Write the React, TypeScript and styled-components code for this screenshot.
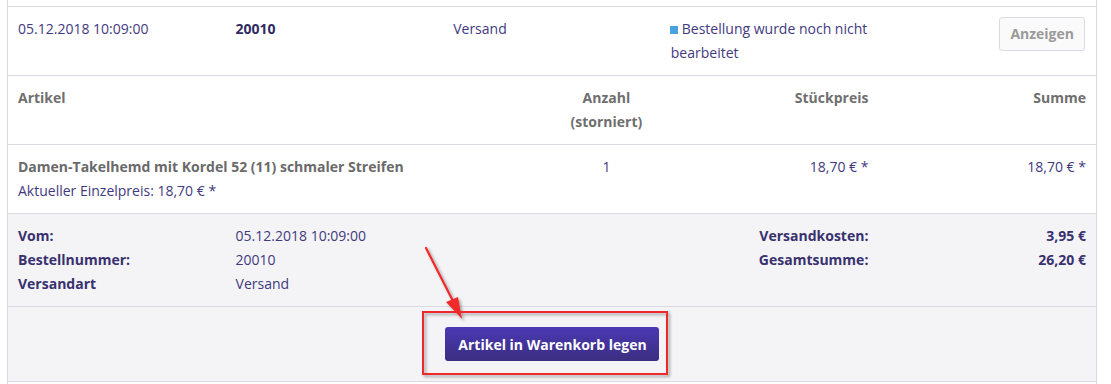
import React from "react";
import styled, { createGlobalStyle } from "styled-components";

const Global = createGlobalStyle`
  html, body { margin: 0; padding: 0; background: #fff; }
  body {
    font-family: "Open Sans", "Liberation Sans", sans-serif;
    font-size: 14px;
    line-height: 24px;
    color: #3f3a80;
  }
`;

const Page = styled.div`
  position: relative;
  width: 1111px;
  height: 384px;
  overflow: hidden;
`;

const Box = styled.div`
  margin-left: 7px;
  width: 1090px;
  box-sizing: border-box;
  border-left: 1px solid #dadae5;
  border-right: 1px solid #dadae5;
`;

const Spacer = styled.div<{ $h: number }>`
  height: ${(p) => p.$h}px;
`;

const Row = styled.div<{ $cols: string; $gray?: boolean }>`
  display: grid;
  grid-template-columns: ${(p) => p.$cols};
  border-top: 1px solid #dadae5;
  padding: 10px 0;
  background: ${(p) => (p.$gray ? "#f4f4f6" : "#fff")};
`;

const Cell = styled.div<{ $align?: "left" | "center" | "right" }>`
  padding: 0 10px;
  text-align: ${(p) => p.$align || "left"};
  min-width: 0;
`;

const Strong = styled.span`
  font-weight: 700;
  color: #2f2b62;
`;

const Status = styled.span`
  display: inline;
`;

const StatusDot = styled.span`
  display: inline-block;
  width: 8px;
  height: 8px;
  background: #4aa3df;
  margin-right: 4px;
  margin-left: -1px;
  vertical-align: 0px;
`;

const GhostButton = styled.button`
  font-family: inherit;
  font-size: 14px;
  font-weight: 700;
  color: #9a9a9a;
  background: #fafafb;
  border: 1px solid #dadae5;
  border-radius: 3px;
  height: 34px;
  padding: 0 10px;
  line-height: 32px;
  margin-right: 1px;
  cursor: pointer;
`;

const HeadText = styled.div`
  font-weight: 700;
  color: #6f6f6f;
`;

const ProductName = styled.div`
  font-weight: 700;
  color: #6a6a6a;
`;

const Label = styled.div`
  font-weight: 700;
  color: #38316f;
`;

const Value = styled.div`
  color: #3f3a80;
`;

const ActionRow = styled.div`
  display: flex;
  justify-content: center;
  border-top: 1px solid #dadae5;
  border-bottom: 1px solid #dadae5;
  background: #f4f4f6;
  padding: 20px 0 20px;
`;

const PrimaryButton = styled.button`
  font-family: inherit;
  font-size: 14px;
  font-weight: 700;
  color: #fff;
  height: 34px;
  padding: 0 12px 0 13px;
  border: 0;
  border-radius: 3px;
  background: linear-gradient(to bottom, #4b38b4 0%, #3b2e80 100%);
  cursor: pointer;
`;

const Annotation = styled.svg`
  position: absolute;
  left: 0;
  top: 0;
  pointer-events: none;
`;

export default function App() {
  return (
    <Page>
      <Global />
      <Box>
        <Spacer $h={6} />
        <Row $cols="repeat(5, 1fr)">
          <Cell>05.12.2018 10:09:00</Cell>
          <Cell>
            <Strong>20010</Strong>
          </Cell>
          <Cell>Versand</Cell>
          <Cell>
            <Status>
              <StatusDot />
              Bestellung wurde noch nicht bearbeitet
            </Status>
          </Cell>
          <Cell $align="right">
            <GhostButton>Anzeigen</GhostButton>
          </Cell>
        </Row>
        <Row $cols="50% 10% 20% 20%">
          <Cell>
            <HeadText>Artikel</HeadText>
          </Cell>
          <Cell $align="center">
            <HeadText>
              Anzahl
              <br />
              (storniert)
            </HeadText>
          </Cell>
          <Cell $align="right">
            <HeadText>Stückpreis</HeadText>
          </Cell>
          <Cell $align="right">
            <HeadText>Summe</HeadText>
          </Cell>
        </Row>
        <Row $cols="50% 10% 20% 20%">
          <Cell>
            <ProductName>Damen-Takelhemd mit Kordel 52 (11) schmaler Streifen</ProductName>
            <Value>Aktueller Einzelpreis: 18,70 € *</Value>
          </Cell>
          <Cell $align="center">
            <Value>1</Value>
          </Cell>
          <Cell $align="right">
            <Value>18,70 € *</Value>
          </Cell>
          <Cell $align="right">
            <Value>18,70 € *</Value>
          </Cell>
        </Row>
        <Row $cols="repeat(5, 1fr)" $gray>
          <Cell>
            <Label>Vom:</Label>
            <Label>Bestellnummer:</Label>
            <Label>Versandart</Label>
          </Cell>
          <Cell>
            <Value>05.12.2018 10:09:00</Value>
            <Value>20010</Value>
            <Value>Versand</Value>
          </Cell>
          <Cell />
          <Cell $align="right">
            <Label>Versandkosten:</Label>
            <Label>Gesamtsumme:</Label>
          </Cell>
          <Cell $align="right">
            <Label>3,95 €</Label>
            <Label>26,20 €</Label>
          </Cell>
        </Row>
        <ActionRow>
          <PrimaryButton>Artikel in Warenkorb legen</PrimaryButton>
        </ActionRow>
        <Spacer $h={3} />
      </Box>
      <Annotation width="1111" height="384" viewBox="0 0 1111 384">
        <defs>
          <filter id="sh" x="-20%" y="-20%" width="140%" height="140%">
            <feDropShadow dx="2" dy="2" stdDeviation="1.5" floodColor="#000" floodOpacity="0.35" />
          </filter>
        </defs>
        <g filter="url(#sh)">
          <rect x="423" y="312" width="244" height="62" fill="none" stroke="#ee2a2a" strokeWidth="2" />
          <line x1="426" y1="248" x2="455" y2="305" stroke="#ee2a2a" strokeWidth="2.2" strokeLinecap="round" />
          <polygon points="462,319 446,302 458,297" fill="#ee2a2a" />
        </g>
      </Annotation>
    </Page>
  );
}
